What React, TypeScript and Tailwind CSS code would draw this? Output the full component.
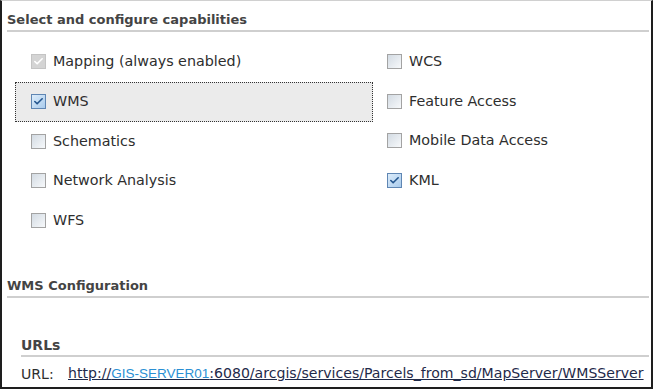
import { Check } from "lucide-react";

type Cap = { label: string; checked?: boolean; disabled?: boolean };

const LEFT: Cap[] = [
  { label: "Mapping (always enabled)", checked: true, disabled: true },
  { label: "WMS", checked: true },
  { label: "Schematics" },
  { label: "Network Analysis" },
  { label: "WFS" },
];

const RIGHT: Cap[] = [
  { label: "WCS" },
  { label: "Feature Access" },
  { label: "Mobile Data Access" },
  { label: "KML", checked: true },
];

function Box({ checked, disabled }: { checked?: boolean; disabled?: boolean }) {
  if (disabled) {
    return (
      <span className="flex h-[15px] w-[15px] shrink-0 items-center justify-center border border-[#c4c4c4] bg-[#d4d4d4]">
        <Check className="h-[11px] w-[11px] text-white" strokeWidth={3.5} />
      </span>
    );
  }
  if (checked) {
    return (
      <span className="flex h-[15px] w-[15px] shrink-0 items-center justify-center border border-[#5f86b3] bg-gradient-to-br from-[#dcecfa] to-[#a9cbec]">
        <Check className="h-[11px] w-[11px] text-[#23558e]" strokeWidth={3.5} />
      </span>
    );
  }
  return (
    <span className="h-[15px] w-[15px] shrink-0 border border-[#a3a3a3] bg-gradient-to-br from-[#d3dbe3] to-[#f7f9fb]" />
  );
}

function Row({ cap, focused }: { cap: Cap; focused?: boolean }) {
  return (
    <div
      className={
        focused
          ? "flex h-[40px] items-center gap-[7px] border border-dotted border-[#333] bg-[#ebebeb] pl-[15px]"
          : "flex h-[39.5px] items-center gap-[7px] pl-[16px]"
      }
    >
      <Box checked={cap.checked} disabled={cap.disabled} />
      <span className="whitespace-nowrap text-[14.3px] text-[#2e2e2e]">{cap.label}</span>
    </div>
  );
}

export default function App() {
  return (
    <div
      className="h-[389px] w-[653px] overflow-hidden border-x-2 border-b-2 border-t border-[#1e1e1e] border-t-[#d0d0d0] bg-white"
      style={{ fontFamily: '"DejaVu Sans", Verdana, sans-serif' }}
    >
      <div className="ml-[5px] mr-[2px] mt-[11px] border-b-2 border-[#cfcfcf] pb-[2px]">
        <h2 className="whitespace-nowrap text-[13px] font-bold leading-[16px] text-[#444]">
          Select and configure capabilities
        </h2>
      </div>

      <div className="mt-[10px] flex">
        <div className="ml-[13px] w-[358px]">
          {LEFT.map((cap) => (
            <Row key={cap.label} cap={cap} focused={cap.label === "WMS"} />
          ))}
        </div>
        <div className="ml-[-2px]">
          {RIGHT.map((cap) => (
            <Row key={cap.label} cap={cap} />
          ))}
        </div>
      </div>

      <div className="ml-[5px] mr-[2px] mt-[38px] border-b-2 border-[#cfcfcf] pb-[2px]">
        <h3 className="text-[13px] font-bold leading-[16px] text-[#444]">WMS Configuration</h3>
      </div>

      <div className="ml-[19px] mr-[2px] mt-[39px] border-b-2 border-[#cfcfcf] pb-[2px]">
        <h4 className="text-[14px] font-bold leading-[16px] text-[#444]">URLs</h4>
      </div>

      <div className="ml-[19px] mt-[8px] flex items-center whitespace-nowrap text-[14.1px] leading-[16px]">
        <span className="w-[47px] text-[#2e2e2e]">URL:</span>
        <a className="text-[#1f2a4a] underline" href="#">
          http://
          <span
            className="text-[13.5px] text-[#2a8fd4]"
            style={{ fontFamily: '"Liberation Sans", Arial, sans-serif' }}
          >
            GIS-SERVER01
          </span>
          :6080/arcgis/services/Parcels_from_sd/MapServer/WMSServer
        </a>
      </div>
    </div>
  );
}
